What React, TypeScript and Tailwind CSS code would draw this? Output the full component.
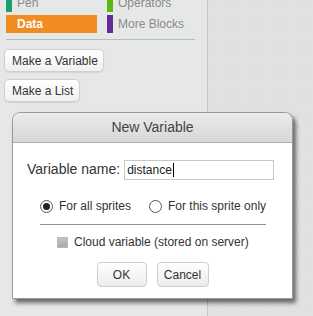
import React from "react";

const font = { fontFamily: '"Liberation Sans", Arial, sans-serif' };

const Category = ({ label, color, selected }: { label: string; color: string; selected?: boolean }) => {
  if (selected) {
    return (
      <div className="flex h-[18px] w-[91px] items-center whitespace-nowrap bg-[#f08c21] pl-[11px] text-[12px] font-bold text-white">
        {label}
      </div>
    );
  }
  return (
    <div className="flex h-[18px] items-center gap-[5px] whitespace-nowrap text-[12px] text-[#8a8a8a]">
      <span className={`h-[18px] w-[6px] shrink-0 ${color}`} />
      {label}
    </div>
  );
};

const PaletteButton = ({ label, w }: { label: string; w: string }) => (
  <button
    className={`flex h-[23px] ${w} items-center justify-start whitespace-nowrap rounded-[5px] border border-[#cfcfcf] bg-gradient-to-b from-white to-[#f0f0f0] pl-[7px] text-[12px] text-[#333] shadow-[0_1px_1px_rgba(0,0,0,0.08)]`}
  >
    {label}
  </button>
);

export default function App() {
  return (
    <div className="relative flex h-[316px] w-[313px] overflow-hidden" style={font}>
      {/* palette */}
      <div className="flex w-[208px] shrink-0 flex-col border-r border-[#c4c6c6] bg-[#e6e8e8] pl-[6px]">
        <div className="-mt-[6px] grid w-[189px] grid-cols-[101px_1fr] gap-y-[3px]">
          <Category label="Pen" color="bg-[#1e9e6f]" />
          <Category label="Operators" color="bg-[#5cb712]" />
          <Category label="Data" color="" selected />
          <Category label="More Blocks" color="bg-[#632d99]" />
        </div>
        <div className="mt-[6px] h-px w-[189px] bg-[#b8bcbf]" />
        <div className="-ml-[2px] mt-[9px] flex flex-col gap-[7px]">
          <PaletteButton label="Make a Variable" w="w-[100px]" />
          <PaletteButton label="Make a List" w="w-[76px]" />
        </div>
      </div>
      {/* scripts area */}
      <div className="flex-1 bg-[#e0e2e2] bg-[radial-gradient(circle,#d6d8d8_1px,transparent_1.2px)] bg-[size:12px_12px]" />

      {/* dialog */}
      <div className="absolute left-[12px] top-[112px] w-[281px] rounded-t-[8px] border border-[#9a9a9a] bg-white shadow-[3px_4px_4px_rgba(0,0,0,0.55)]">
        <div className="flex h-[30px] items-center justify-center whitespace-nowrap rounded-t-[7px] border-b border-[#b0b0b0] bg-gradient-to-b from-[#ebebeb] to-[#d7d7d7] text-[14px] text-[#444]">
          New Variable
        </div>
        <div className="flex flex-col whitespace-nowrap px-[14px] pb-[11px]">
          <div className="mt-[16px] flex items-center">
            <span className="text-[14px] text-[#333]">Variable name:</span>
            <div className="ml-[4px] flex h-[20px] w-[150px] items-center border border-[#c8c8c8] pl-[2px] text-[12px] text-[#222]">
              distance<span className="ml-px h-[14px] w-px bg-black" />
            </div>
          </div>
          <div className="mt-[17px] flex h-[18px] items-center pl-[13px] text-[12px] text-[#333]">
            <span className="flex h-[13px] w-[13px] shrink-0 items-center justify-center rounded-full border border-[#555] bg-white">
              <span className="h-[7px] w-[7px] rounded-full bg-[#222]" />
            </span>
            <span className="ml-[6px]">For all sprites</span>
            <span className="ml-[18px] h-[13px] w-[13px] shrink-0 rounded-full border border-[#555] bg-white" />
            <span className="ml-[6px]">For this sprite only</span>
          </div>
          <div className="ml-[13px] mt-[9px] h-px w-[226px] bg-[#8f8f8f]" />
          <div className="mt-[8px] flex h-[18px] items-center pl-[30px] text-[12px] text-[#333]">
            <span className="h-[11px] w-[11px] shrink-0 border border-[#b8b8b8] bg-gradient-to-b from-[#c4c4c4] to-[#a9a9a9]" />
            <span className="ml-[6px]">Cloud variable (stored on server)</span>
          </div>
          <div className="mt-[11px] flex justify-center gap-[10px] text-[12px] text-[#333]">
            <button className="h-[25px] w-[50px] rounded-[4px] border border-[#cfcfcf] bg-gradient-to-b from-white to-[#ececec]">
              OK
            </button>
            <button className="h-[25px] w-[52px] rounded-[4px] border border-[#cfcfcf] bg-gradient-to-b from-white to-[#ececec]">
              Cancel
            </button>
          </div>
        </div>
      </div>
    </div>
  );
}
